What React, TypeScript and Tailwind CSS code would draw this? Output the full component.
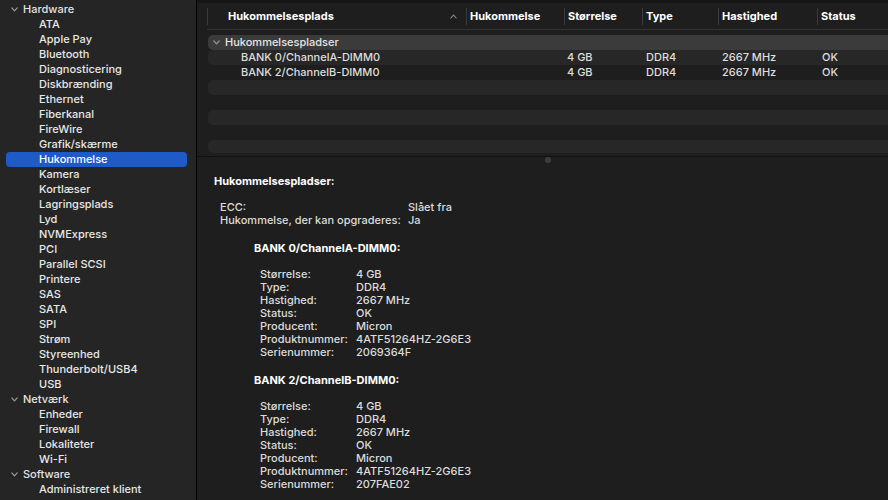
import React from 'react';

type SideGroup = { title: string; items: string[] };

const sidebar: SideGroup[] = [
  {
    title: 'Hardware',
    items: [
      'ATA',
      'Apple Pay',
      'Bluetooth',
      'Diagnosticering',
      'Diskbrænding',
      'Ethernet',
      'Fiberkanal',
      'FireWire',
      'Grafik/skærme',
      'Hukommelse',
      'Kamera',
      'Kortlæser',
      'Lagringsplads',
      'Lyd',
      'NVMExpress',
      'PCI',
      'Parallel SCSI',
      'Printere',
      'SAS',
      'SATA',
      'SPI',
      'Strøm',
      'Styreenhed',
      'Thunderbolt/USB4',
      'USB',
    ],
  },
  { title: 'Netværk', items: ['Enheder', 'Firewall', 'Lokaliteter', 'Wi-Fi'] },
  { title: 'Software', items: ['Administreret klient'] },
];

const banks = [
  { name: 'BANK 0/ChannelA-DIMM0', serial: '2069364F' },
  { name: 'BANK 2/ChannelB-DIMM0', serial: '207FAE02' },
];

const headCols = 'grid grid-cols-[259px_98px_78px_76px_99px_1fr]';
const rowCols = 'grid grid-cols-[258px_98px_78px_76px_99px_1fr]';

const Chevron: React.FC<{ className?: string }> = ({ className }) => (
  <svg width="7" height="5" viewBox="0 0 7 5" className={className}>
    <path d="M0.8 0.9 L3.5 3.8 L6.2 0.9" fill="none" stroke="#9c9c9c" strokeWidth="1.2" strokeLinecap="round" strokeLinejoin="round" />
  </svg>
);

const Sidebar: React.FC = () => (
  <aside className="w-[197px] shrink-0 bg-[#242524] pt-[2px] border-r border-black">
    {sidebar.map((group) => (
      <div key={group.title}>
        <div className="flex items-center h-[15px] pl-[11px] gap-[5px] text-[#e3e3e3]">
          <Chevron />
          <span className="leading-[15px]">{group.title}</span>
        </div>
        {group.items.map((item) => (
          <div key={item} className="pl-[6px] pr-[9px]">
            <div
              className={
                item === 'Hukommelse'
                  ? 'h-[15px] leading-[15px] pl-[33px] rounded-[4px] bg-[#1e5bc6] text-white'
                  : 'h-[15px] leading-[15px] pl-[33px] text-[#e8e8e8]'
              }
            >
              {item}
            </div>
          </div>
        ))}
      </div>
    ))}
  </aside>
);

const HeaderCell: React.FC<{ label: string; first?: boolean }> = ({ label, first }) => (
  <div className="flex items-center h-full">
    <div className="w-px h-[17px] bg-[#3b3b3b]" />
    <span className={first ? 'pl-[20px] font-bold text-white' : 'pl-[3px] font-bold text-white'}>{label}</span>
    {first && (
      <svg width="7" height="5" viewBox="0 0 7 5" className="ml-auto mr-[9px]">
        <path d="M0.8 4 L3.5 1.1 L6.2 4" fill="none" stroke="#8a8a8a" strokeWidth="1.1" strokeLinecap="round" />
      </svg>
    )}
  </div>
);

const MemoryTable: React.FC = () => {
  const stripes = [true, false, true, false, true, false, true];
  return (
    <section className="h-[153px] shrink-0 flex flex-col">
      <div className={`${headCols} h-[27px] ml-[10px] border-b border-[#333333]`}>
        <HeaderCell label="Hukommelsesplads" first />
        <HeaderCell label="Hukommelse" />
        <HeaderCell label="Størrelse" />
        <HeaderCell label="Type" />
        <HeaderCell label="Hastighed" />
        <HeaderCell label="Status" />
      </div>
      <div className="pt-[5px] pl-[11px]">
        <div className="flex items-center h-[15px] rounded-l-[5px] bg-[#3b3b3b] pl-[5px] gap-[5px] text-[#e6e6e6]">
          <Chevron />
          <span>Hukommelsespladser</span>
        </div>
        {stripes.map((light, i) => {
          const bank = banks[i];
          return (
            <div
              key={i}
              className={`${rowCols} leading-[15px] text-[#dedede] ${
                light ? 'bg-[#272727] rounded-l-[5px]' : ''
              } ${i === 6 ? 'h-[13px]' : 'h-[15px]'}`}
            >
              <span className="pl-[33px]">{bank ? bank.name : ''}</span>
              <span />
              <span className="pl-[3px]">{bank ? '4 GB' : ''}</span>
              <span className="pl-[4px]">{bank ? 'DDR4' : ''}</span>
              <span className="pl-[4px]">{bank ? '2667 MHz' : ''}</span>
              <span className="pl-[5px]">{bank ? 'OK' : ''}</span>
            </div>
          );
        })}
      </div>
    </section>
  );
};

const KeyValue: React.FC<{ k: string; v: string; keyWidth: string }> = ({ k, v, keyWidth }) => (
  <div className="flex h-[13px] leading-[13px]">
    <span className={keyWidth}>{k}</span>
    <span>{v}</span>
  </div>
);

const Details: React.FC = () => (
  <section className="flex-1 border-t border-[#121212] pt-[18px] pl-[17px] text-[#dcdcdc]">
    <div className="h-[13px] leading-[13px] font-bold text-white">Hukommelsespladser:</div>
    <div className="mt-[13px] pl-[6px]">
      <KeyValue keyWidth="w-[188px]" k="ECC:" v="Slået fra" />
      <KeyValue keyWidth="w-[188px]" k="Hukommelse, der kan opgraderes:" v="Ja" />
    </div>
    {banks.map((bank) => (
      <div key={bank.name} className="mt-[15px] pl-[40px]">
        <div className="h-[13px] leading-[13px] font-bold text-white">{bank.name}:</div>
        <div className="mt-[13px] pl-[6px]">
          <KeyValue keyWidth="w-[96px]" k="Størrelse:" v="4 GB" />
          <KeyValue keyWidth="w-[96px]" k="Type:" v="DDR4" />
          <KeyValue keyWidth="w-[96px]" k="Hastighed:" v="2667 MHz" />
          <KeyValue keyWidth="w-[96px]" k="Status:" v="OK" />
          <KeyValue keyWidth="w-[96px]" k="Producent:" v="Micron" />
          <KeyValue keyWidth="w-[96px]" k="Produktnummer:" v="4ATF51264HZ-2G6E3" />
          <KeyValue keyWidth="w-[96px]" k="Serienummer:" v={bank.serial} />
        </div>
      </div>
    ))}
  </section>
);

const App: React.FC = () => (
  <div className="flex w-[888px] h-[500px] overflow-hidden bg-[#1e1e1e] text-[11px] font-medium font-['Inter','Liberation_Sans',sans-serif]">
    <Sidebar />
    <main className="flex-1 flex flex-col min-w-0 border-t-[3px] border-[#151515]">
      <MemoryTable />
      <div className="relative h-0">
        <div className="absolute left-[348px] top-[1px] w-[6px] h-[6px] rounded-full bg-[#3e3e3e]" />
      </div>
      <Details />
    </main>
  </div>
);

export default App;
